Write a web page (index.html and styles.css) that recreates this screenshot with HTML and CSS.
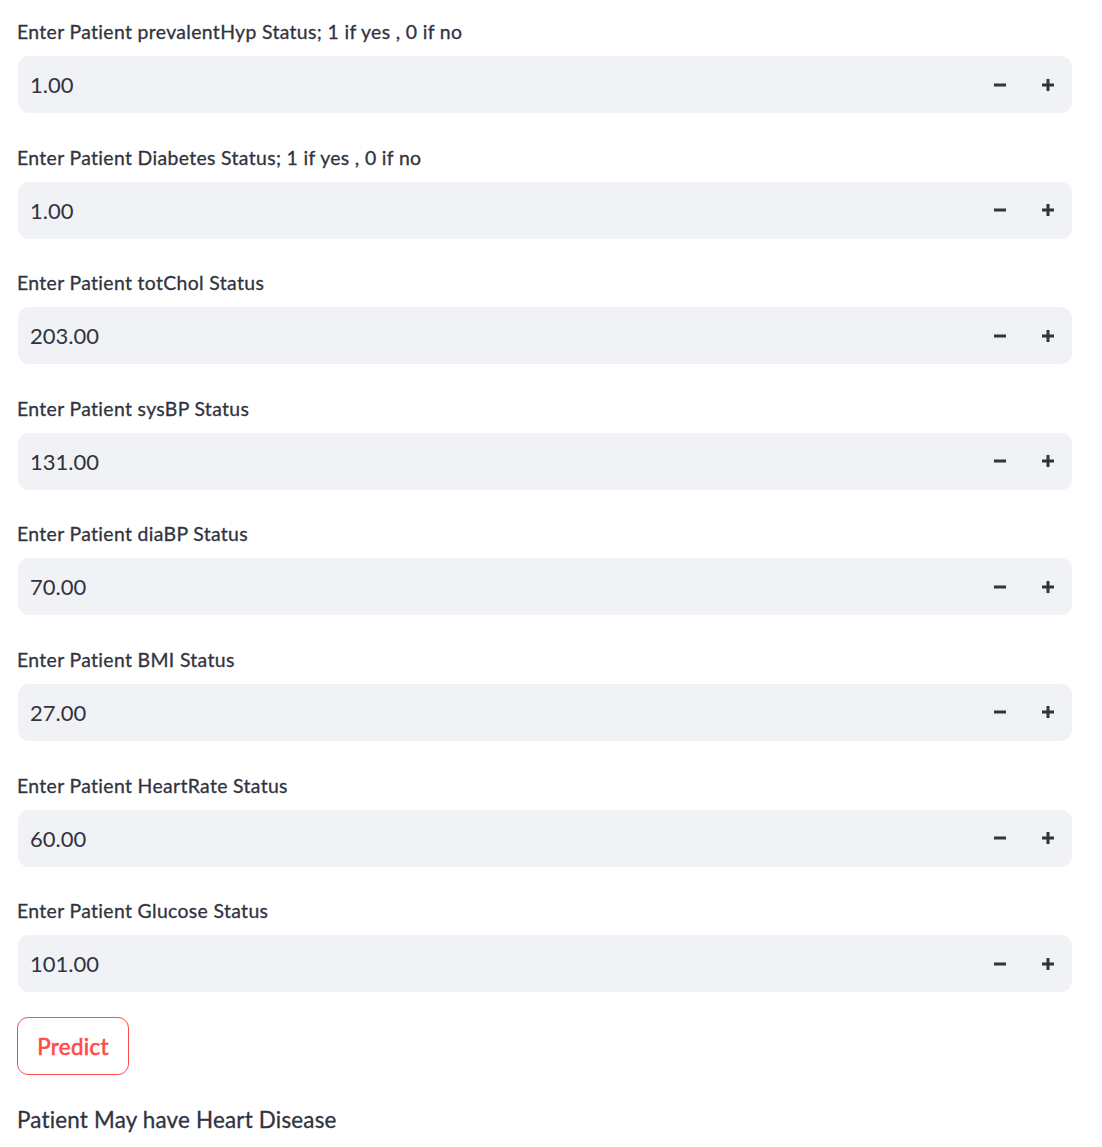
FILE: index.html
```html
<!DOCTYPE html>
<html>
<head>
<meta charset="utf-8">
<link rel="stylesheet" href="styles.css">
</head>
<body>
<main class="page">
  <div class="field">
    <label class="label">Enter Patient prevalentHyp Status; 1 if yes , 0 if no</label>
    <div class="numinput"><span class="value">1.00</span><div class="steps"><button class="step"><svg width="14" height="14" viewBox="0 0 14 14"><rect x="1" y="5.5" width="12" height="3" fill="#31333f"/></svg></button><button class="step"><svg width="14" height="14" viewBox="0 0 14 14"><rect x="1" y="5.5" width="12" height="3" fill="#31333f"/><rect x="5.5" y="1" width="3" height="12" fill="#31333f"/></svg></button></div></div>
  </div>
  <div class="field">
    <label class="label">Enter Patient Diabetes Status; 1 if yes , 0 if no</label>
    <div class="numinput"><span class="value">1.00</span><div class="steps"><button class="step"><svg width="14" height="14" viewBox="0 0 14 14"><rect x="1" y="5.5" width="12" height="3" fill="#31333f"/></svg></button><button class="step"><svg width="14" height="14" viewBox="0 0 14 14"><rect x="1" y="5.5" width="12" height="3" fill="#31333f"/><rect x="5.5" y="1" width="3" height="12" fill="#31333f"/></svg></button></div></div>
  </div>
  <div class="field">
    <label class="label">Enter Patient totChol Status</label>
    <div class="numinput"><span class="value">203.00</span><div class="steps"><button class="step"><svg width="14" height="14" viewBox="0 0 14 14"><rect x="1" y="5.5" width="12" height="3" fill="#31333f"/></svg></button><button class="step"><svg width="14" height="14" viewBox="0 0 14 14"><rect x="1" y="5.5" width="12" height="3" fill="#31333f"/><rect x="5.5" y="1" width="3" height="12" fill="#31333f"/></svg></button></div></div>
  </div>
  <div class="field">
    <label class="label">Enter Patient sysBP Status</label>
    <div class="numinput"><span class="value">131.00</span><div class="steps"><button class="step"><svg width="14" height="14" viewBox="0 0 14 14"><rect x="1" y="5.5" width="12" height="3" fill="#31333f"/></svg></button><button class="step"><svg width="14" height="14" viewBox="0 0 14 14"><rect x="1" y="5.5" width="12" height="3" fill="#31333f"/><rect x="5.5" y="1" width="3" height="12" fill="#31333f"/></svg></button></div></div>
  </div>
  <div class="field">
    <label class="label">Enter Patient diaBP Status</label>
    <div class="numinput"><span class="value">70.00</span><div class="steps"><button class="step"><svg width="14" height="14" viewBox="0 0 14 14"><rect x="1" y="5.5" width="12" height="3" fill="#31333f"/></svg></button><button class="step"><svg width="14" height="14" viewBox="0 0 14 14"><rect x="1" y="5.5" width="12" height="3" fill="#31333f"/><rect x="5.5" y="1" width="3" height="12" fill="#31333f"/></svg></button></div></div>
  </div>
  <div class="field">
    <label class="label">Enter Patient BMI Status</label>
    <div class="numinput"><span class="value">27.00</span><div class="steps"><button class="step"><svg width="14" height="14" viewBox="0 0 14 14"><rect x="1" y="5.5" width="12" height="3" fill="#31333f"/></svg></button><button class="step"><svg width="14" height="14" viewBox="0 0 14 14"><rect x="1" y="5.5" width="12" height="3" fill="#31333f"/><rect x="5.5" y="1" width="3" height="12" fill="#31333f"/></svg></button></div></div>
  </div>
  <div class="field">
    <label class="label">Enter Patient HeartRate Status</label>
    <div class="numinput"><span class="value">60.00</span><div class="steps"><button class="step"><svg width="14" height="14" viewBox="0 0 14 14"><rect x="1" y="5.5" width="12" height="3" fill="#31333f"/></svg></button><button class="step"><svg width="14" height="14" viewBox="0 0 14 14"><rect x="1" y="5.5" width="12" height="3" fill="#31333f"/><rect x="5.5" y="1" width="3" height="12" fill="#31333f"/></svg></button></div></div>
  </div>
  <div class="field">
    <label class="label">Enter Patient Glucose Status</label>
    <div class="numinput"><span class="value">101.00</span><div class="steps"><button class="step"><svg width="14" height="14" viewBox="0 0 14 14"><rect x="1" y="5.5" width="12" height="3" fill="#31333f"/></svg></button><button class="step"><svg width="14" height="14" viewBox="0 0 14 14"><rect x="1" y="5.5" width="12" height="3" fill="#31333f"/><rect x="5.5" y="1" width="3" height="12" fill="#31333f"/></svg></button></div></div>
  </div>
  <button class="predict">Predict</button>
  <p class="result">Patient May have Heart Disease</p>
</main>
</body>
</html>
```
FILE: styles.css
```css
html, body {
  margin: 0;
  padding: 0;
  background: #ffffff;
}
body {
  font-family: "Lato", "Noto Sans", sans-serif;
  color: #31333f;
}
.page {
  padding: 20px 30px 0 17px;
  display: flex;
  flex-direction: column;
  align-items: flex-start;
}
.field {
  width: 1055px;
  margin-bottom: 32.6px;
}
.field:last-of-type {
  margin-bottom: 0;
}
.label {
  display: block;
  font-size: 19.4px;
  line-height: 24px;
  height: 24px;
  margin-bottom: 12px;
  letter-spacing: 0.35px;
  -webkit-text-stroke: 0.3px #31333f;
  color: #31333f;
}
.numinput {
  margin-left: 1px;
  height: 57px;
  background: #f0f2f6;
  border-radius: 11px;
  display: flex;
  align-items: center;
  justify-content: space-between;
}
.value {
  padding-left: 12px;
  font-size: 22px;
  color: #31333f;
}
.steps {
  display: flex;
  height: 100%;
}
.step {
  width: 48px;
  height: 100%;
  border: none;
  background: transparent;
  padding: 0;
  display: flex;
  align-items: center;
  justify-content: center;
}
.predict {
  margin-top: 25px;
  width: 112px;
  height: 58px;
  border: 1px solid #ff4b4b;
  border-radius: 11px;
  background: #ffffff;
  color: #ff4b4b;
  font-family: "Lato", "Noto Sans", sans-serif;
  font-size: 22.4px;
  font-weight: 400;
  letter-spacing: 0.3px;
  -webkit-text-stroke: 0.6px #ff4b4b;
  padding: 0;
}
.result {
  margin: 30px 0 0 0;
  font-size: 22.4px;
  line-height: 30px;
  letter-spacing: 0.2px;
  -webkit-text-stroke: 0.3px #31333f;
  color: #31333f;
}
```
